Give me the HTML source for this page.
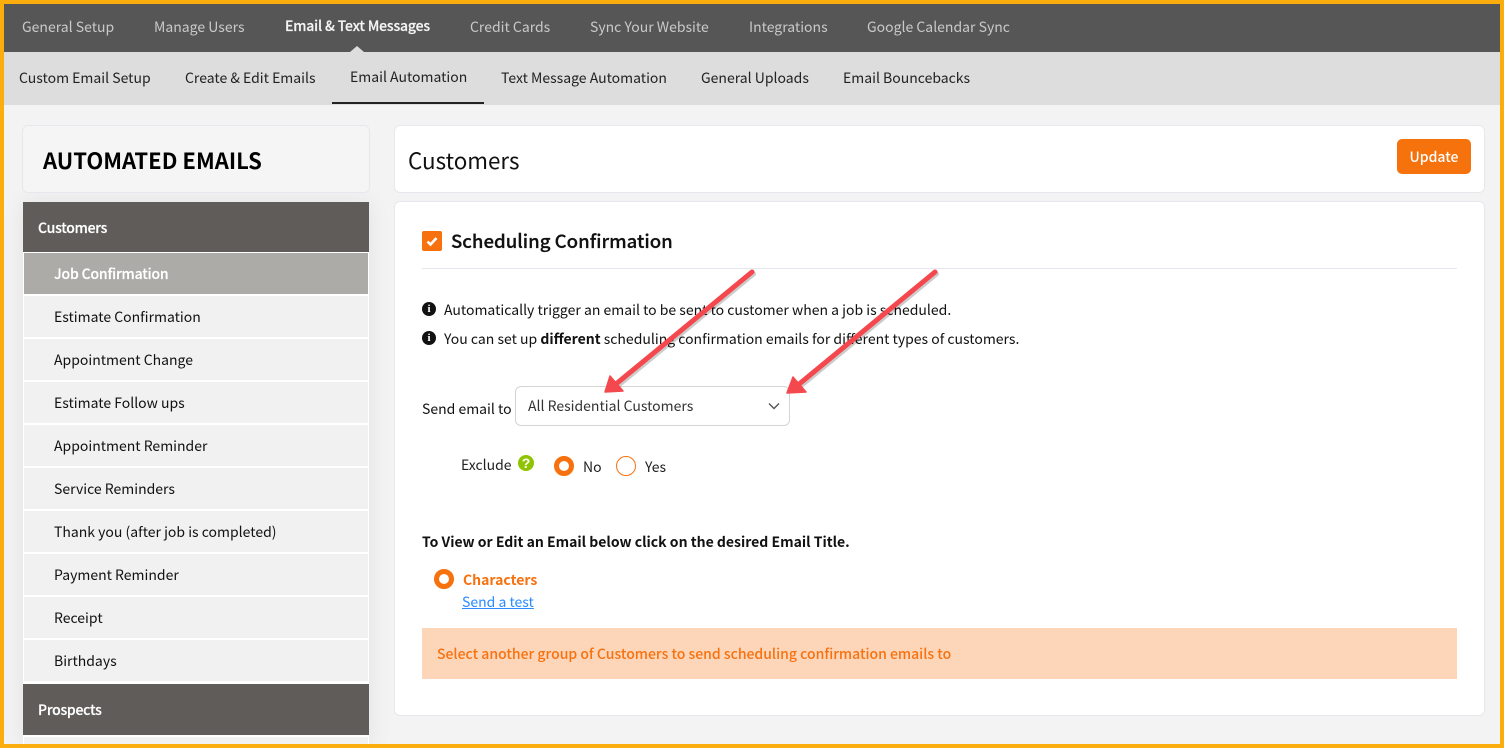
<!DOCTYPE html>
<html><head><meta charset="utf-8"><style>
*{box-sizing:border-box}
html,body{margin:0;padding:0}
body{width:1504px;height:748px;position:relative;overflow:hidden;background:#f3f3f4;font-family:"Noto Sans CJK JP","Liberation Sans",sans-serif;font-size:14px;color:#111}
.a{position:absolute;white-space:nowrap}
.t{position:absolute;white-space:nowrap;line-height:20px;height:20px}
.n{color:#c9c9c9;top:17px}
.s{color:#222;top:68px}
.card{position:absolute;background:#fff;border:1px solid #e7e7ee;border-radius:6px}
.side{position:absolute;left:24px;width:344px;height:41px;background:#f1f1f1;line-height:43px;padding-left:30px;white-space:nowrap;color:#111}
.hd{position:absolute;left:23px;width:346px;background:#5f5c5a;color:#fff;font-weight:500;padding-left:15px;white-space:nowrap;letter-spacing:-.25px;-webkit-text-stroke:.2px #fff}
.info{position:absolute;left:422px;width:14px;height:14px;border-radius:50%;background:#111;color:#fff;font:bold 11px/14px "Liberation Serif",serif;text-align:center}
.radio{position:absolute;border-radius:50%;background:#fff}
</style></head><body>
<div class="a" style="left:4px;top:4px;width:1496px;height:48px;background:#565656"></div>
<div class="a" style="left:4px;top:52px;width:1496px;height:53px;background:#dddddd"></div>
<div class="a" style="left:350px;top:46px;width:0;height:0;border-left:7px solid transparent;border-right:7px solid transparent;border-bottom:6px solid #dddddd"></div>
<div class="t n" style="left:22px">General Setup</div>
<div class="t n" style="left:154px">Manage Users</div>
<div class="t" style="left:285px;top:16px;color:#f4f4f4;font-weight:500;letter-spacing:-.17px;-webkit-text-stroke:.2px #f4f4f4">Email &amp; Text Messages</div>
<div class="t n" style="left:470px">Credit Cards</div>
<div class="t n" style="left:590px">Sync Your Website</div>
<div class="t n" style="left:749px">Integrations</div>
<div class="t n" style="left:867px">Google Calendar Sync</div>

<div class="t s" style="left:19px">Custom Email Setup</div>
<div class="t s" style="left:185px">Create &amp; Edit Emails</div>
<div class="t s" style="left:350px;top:67px">Email Automation</div>
<div class="a" style="left:332px;top:102px;width:152px;height:2px;background:#222"></div>
<div class="t s" style="left:501px">Text Message Automation</div>
<div class="t s" style="left:701px">General Uploads</div>
<div class="t s" style="left:843px">Email Bouncebacks</div>

<div class="a" style="left:23px;top:202px;width:346px;height:546px;box-shadow:0 0 22px rgba(0,0,0,.07)"></div>
<div class="card" style="left:22px;top:125px;width:348px;height:68px;background:#f5f5f6"></div>
<div class="a" style="left:43px;top:143px;line-height:34px;font-size:22px;font-weight:700;color:#000">AUTOMATED EMAILS</div>

<div class="a" style="left:23px;top:252px;width:346px;height:496px;background:#fff"></div>
<div class="hd" style="top:202px;height:50px;line-height:52px">Customers</div>
<div class="side" style="top:253px;background:#adaba8;color:#fff;font-weight:500;letter-spacing:-.17px;-webkit-text-stroke:.2px #fff">Job Confirmation</div>
<div class="side" style="top:296px">Estimate Confirmation</div>
<div class="side" style="top:339px">Appointment Change</div>
<div class="side" style="top:382px">Estimate Follow ups</div>
<div class="side" style="top:425px">Appointment Reminder</div>
<div class="side" style="top:468px">Service Reminders</div>
<div class="side" style="top:511px">Thank you (after job is completed)</div>
<div class="side" style="top:554px">Payment Reminder</div>
<div class="side" style="top:597px">Receipt</div>
<div class="side" style="top:640px">Birthdays</div>
<div class="hd" style="top:684px;height:51px;line-height:53px">Prospects</div>
<div class="side" style="top:737px;height:7px"></div>

<div class="card" style="left:394px;top:125px;width:1091px;height:68px"></div>
<div class="a" style="left:408px;top:143px;line-height:34px;font-size:22.4px;color:#111">Customers</div>
<div class="a" style="left:1397px;top:139px;width:74px;height:35px;background:#f5720d;border-radius:5px;color:#fff;text-align:center;line-height:37px;font-size:14px;font-weight:500">Update</div>

<div class="card" style="left:394px;top:201px;width:1091px;height:515px"></div>
<div class="a" style="left:422px;top:231px;width:20px;height:20px;background:#f7710e;border-radius:2px"></div>
<svg class="a" style="left:422px;top:231px" width="20" height="20" viewBox="0 0 20 20"><path d="M5.5 10.5l3 3 6-6.5" fill="none" stroke="#fff" stroke-width="2.6"/></svg>
<div class="a" style="left:451px;top:226px;line-height:30px;font-size:18.6px;font-weight:500;color:#111;-webkit-text-stroke:.25px #111">Scheduling Confirmation</div>
<div class="a" style="left:422px;top:268px;width:1035px;height:1px;background:#e6e6ee"></div>

<div class="info" style="top:302px">i</div>
<div class="t" style="left:444px;top:300px">Automatically trigger an email to be sent to customer when a job is scheduled.</div>
<div class="info" style="top:331px">i</div>
<div class="t" style="left:444px;top:329px">You can set up <b>different</b> scheduling confirmation emails for different types of customers.</div>

<div class="t" style="left:422px;top:399px">Send email to</div>
<div class="a" style="left:515px;top:386px;width:275px;height:40px;border:1px solid #d4d4d4;border-radius:6px;background:#fff"></div>
<div class="t" style="left:528px;top:396px;color:#333">All Residential Customers</div>
<svg class="a" style="left:767px;top:401px" width="14" height="10" viewBox="0 0 14 10"><path d="M2 2.5l5 5 5-5" fill="none" stroke="#555" stroke-width="1.4"/></svg>

<div class="t" style="left:461px;top:455px;color:#222">Exclude</div>
<div class="a" style="left:518px;top:455px;width:16px;height:16px;border-radius:50%;background:#8fc400;color:#fff;font:bold 14px/16px 'Liberation Sans',sans-serif;text-align:center">?</div>
<div class="radio" style="left:554px;top:456px;width:20px;height:20px;border:5px solid #f7710e"></div>
<div class="t" style="left:583px;top:457px;color:#222">No</div>
<div class="radio" style="left:616px;top:456px;width:20px;height:20px;border:1px solid #f7710e"></div>
<div class="t" style="left:645px;top:457px;color:#222">Yes</div>

<div class="t" style="left:422px;top:532px;font-weight:700;color:#111">To View or Edit an Email below click on the desired Email Title.</div>
<div class="radio" style="left:434px;top:569px;width:20px;height:20px;border:5px solid #f7710e"></div>
<div class="t" style="left:463px;top:570px;color:#f7710e;font-weight:700">Characters</div>
<div class="t" style="left:462px;top:592px;color:#2a8cff;text-decoration:underline">Send a test</div>
<div class="a" style="left:422px;top:628px;width:1035px;height:51px;background:#fdd5b8"></div>
<div class="t" style="left:437px;top:644px;color:#f7710e;font-weight:500">Select another group of Customers to send scheduling confirmation emails to</div>

<svg class="a" style="left:0;top:0" width="1504" height="748" viewBox="0 0 1504 748">
<g fill="none" stroke="#000" stroke-opacity=".2" stroke-width="5" stroke-linecap="round" transform="translate(1.5 2)"><path d="M752 272L616 384"/><path d="M935 272L798 385"/></g>
<g fill="#f4484e" stroke="#f4484e"><path d="M752 272L616 384" stroke-width="5" stroke-linecap="round" fill="none"/><path d="M605 392L610 376L623 391Z" stroke-width="1.5" stroke-linejoin="round"/><path d="M935 272L798 385" stroke-width="5" stroke-linecap="round" fill="none"/><path d="M787 393L793 377L806 392Z" stroke-width="1.5" stroke-linejoin="round"/></g>
</svg>

<div class="a" style="left:0;top:0;width:1504px;height:748px;border:4px solid #fbad0d"></div>
</body></html>
